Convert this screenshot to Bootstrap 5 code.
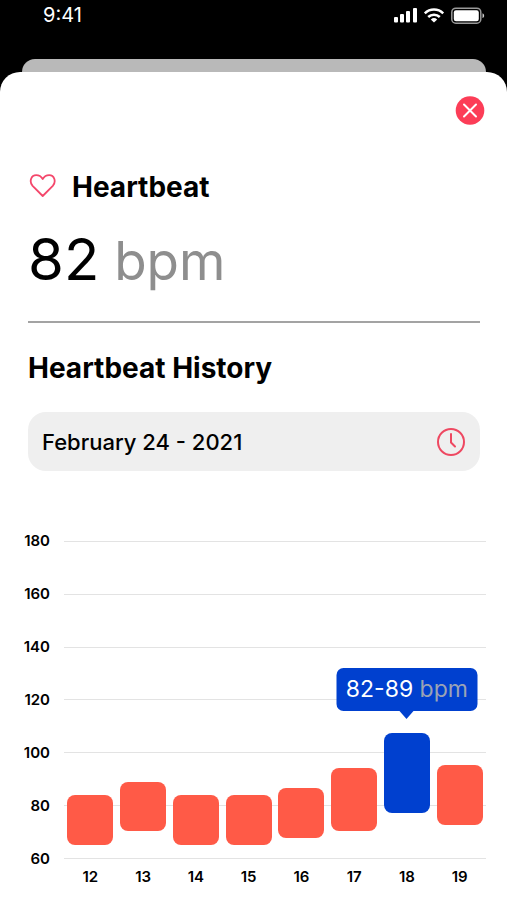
<!DOCTYPE html>
<html lang="en">
<head>
<meta charset="utf-8">
<meta name="viewport" content="width=device-width, initial-scale=1">
<title>Heartbeat</title>
<link href="https://cdn.jsdelivr.net/npm/bootstrap@5.3.0/dist/css/bootstrap.min.css" rel="stylesheet">
<style>
  :root { --plot-height: 318px; --unit: calc(var(--plot-height) / 120); }
  body { font-family: Inter, "Liberation Sans", sans-serif; background: #000; color: #000; }
  .status-bar { height: 59px; padding: 5px 22px 0 43px; font-size: 20px; line-height: 20px; }
  .status-icons { padding-top: 2px; }
  .sheet-behind { height: 13px; margin: 0 21px 0 22px; background: #b9b9b9; border-radius: 14px 14px 0 0; }
  .sheet { border-radius: 20px 20px 0 0; padding: 24px 21px 0 22px; }
  .close-btn { width: 30px; height: 30px; margin-right: 1px; }
  .block { margin: 0 6px; padding-top: 44px; }
  .title { font-size: 28px; line-height: 34px; font-weight: 700; }
  .reading { font-size: 58px; line-height: 70px; margin: 20px 0 25px; }
  .unit-text { color: #8e8e8e; font-size: 53px; }
  .divider { border-top: 2px solid #a3a3a3; opacity: 1; margin: 0 0 28px; }
  .history-title { margin-bottom: 27px; }
  .date-btn { background: #efefef; border-radius: 18px; height: 59px; padding: 0 14px; font-size: 22px; line-height: 28px; font-weight: 500; }
  .chart { display: grid; grid-template-columns: 28px 1fr; column-gap: 14px; padding-top: 61px; font-size: 15px; line-height: 18px; font-weight: 600; }
  .y-axis { height: calc(var(--plot-height) + 18px); }
  .plot { display: grid; height: calc(var(--plot-height) + 18px); padding: 9px 0; }
  .plot > * { grid-area: 1 / 1; }
  .grid-line { height: 1px; background: #e3e3e3; }
  .slot { flex: 1 1 0; display: flex; justify-content: center; }
  .bar { position: relative; width: 46px; border-radius: 8px; background: #ff5a47;
         height: calc((var(--high) - var(--low)) * var(--unit));
         margin-bottom: calc((var(--low) - 60) * var(--unit)); }
  .bar.active-day { background: #0040cf; }
  .bar-tip { position: absolute; left: 50%; bottom: calc(100% + 22px); transform: translateX(-50%);
         height: 43px; width: 141px; border-radius: 7px; background: #0040cf; color: #fff;
         font-size: 23px; line-height: 43px; font-weight: 400; white-space: nowrap; text-align: center; }
  .bar-tip::after { content: ""; position: absolute; top: 100%; left: 50%; margin-left: -7px;
         border: 7px solid transparent; border-top: 8px solid #0040cf; border-bottom: 0; }
  .tip-unit { color: #9aa3b5; }
  .x-axis { grid-column: 2; }
</style>
<script src="https://cdn.jsdelivr.net/npm/bootstrap@5.3.0/dist/js/bootstrap.bundle.min.js"></script>
</head>
<body>
<div class="d-flex flex-column min-vh-100">
  <header class="status-bar d-flex justify-content-between align-items-start text-white">
    <time>9:41</time>
    <div class="status-icons d-flex">
      <svg width="92" height="18" viewBox="0 -2 92 18" role="img" aria-label="Signal, Wi-Fi and battery">
        <g fill="#fff">
          <rect x="1" y="8" width="4" height="5.500" rx="1"/><rect x="7" y="5" width="4" height="8.500" rx="1"/>
          <rect x="13" y="2" width="4" height="11.500" rx="1"/><rect x="20" y="-1" width="4" height="14.500" rx="1"/>
        </g>
        <g fill="none" stroke="#fff" stroke-width="2.500">
          <path d="M31.800 4.300a13.300 13.300 0 0 1 18.400 0"/><path d="M35.200 8a8.400 8.400 0 0 1 11.600 0"/>
        </g>
        <path d="M37.800 10.400a4.900 4.900 0 0 1 6.400 0L41 13.600z" fill="#fff"/>
        <rect x="58.800" y="-.8" width="29" height="15" rx="4" fill="none" stroke="#999" stroke-width="1.500"/>
        <rect x="60.800" y="1.200" width="25" height="11" rx="2.200" fill="#fff"/>
        <path d="M89.500 4.300c2.200.8 2.200 4 0 4.800z" fill="#ccc"/>
      </svg>
    </div>
  </header>
  <div class="sheet-behind"></div>
  <main class="sheet bg-white flex-grow-1">
    <div class="d-flex justify-content-end">
      <button type="button" class="close-btn btn p-0 border-0 d-flex" aria-label="Close">
        <svg width="30" height="30" viewBox="0 0 30 30"><circle cx="15" cy="14.500" r="14.300" fill="#fc3d57"/><path d="M9 8.500l12 12M21 8.500l-12 12" stroke="#fff" stroke-width="2" stroke-linecap="round"/></svg>
      </button>
    </div>

    <section class="block">
      <div class="d-flex align-items-center">
        <svg class="me-3" width="28" height="28" viewBox="0 0 28 28" fill="none" stroke="#f4476b" stroke-width="1.800" stroke-linejoin="round"><path d="M14.700 23 4.600 12.800C.8 8.300 3.300 2.200 8.200 2.200c3 0 5 1.300 6.500 3.800 1.500-2.500 3.500-3.800 6.500-3.800 4.900 0 7.400 6.100 3.600 10.600z"/></svg>
        <h1 class="title mb-0">Heartbeat</h1>
      </div>
      <p class="reading">82<span class="unit-text"> bpm</span></p>
      <hr class="divider">
      <h2 class="title history-title">Heartbeat History</h2>
      <button type="button" class="date-btn w-100 border-0 d-flex justify-content-between align-items-center">
        February 24 - 2021
        <svg width="30" height="30" viewBox="0 0 30 30" fill="none" stroke="#ee4861" stroke-width="2" stroke-linecap="round" stroke-linejoin="round"><circle cx="15" cy="15" r="13"/><path d="M15 7v8.500l4 4"/></svg>
      </button>
    </section>

    <section class="chart" aria-label="Heartbeat range by day">
      <div class="y-axis d-flex flex-column justify-content-between text-end">
        <span>180</span><span>160</span><span>140</span><span>120</span><span>100</span><span>80</span><span>60</span>
      </div>
      <div class="plot">
        <div class="d-flex flex-column justify-content-between">
          <div class="grid-line"></div><div class="grid-line"></div><div class="grid-line"></div><div class="grid-line"></div><div class="grid-line"></div><div class="grid-line"></div><div class="grid-line"></div>
        </div>
        <div class="d-flex align-items-end">
          <div class="slot"><div class="bar" style="--low:65.3;--high:84.2"></div></div>
          <div class="slot"><div class="bar" style="--low:70.4;--high:89.2"></div></div>
          <div class="slot"><div class="bar" style="--low:65.3;--high:84.2"></div></div>
          <div class="slot"><div class="bar" style="--low:65.3;--high:84.2"></div></div>
          <div class="slot"><div class="bar" style="--low:68;--high:86.7"></div></div>
          <div class="slot"><div class="bar" style="--low:70.4;--high:94.3"></div></div>
          <div class="slot"><div class="bar active-day" style="--low:77.5;--high:107.5"><div class="bar-tip">82-89 <span class="tip-unit">bpm</span></div></div></div>
          <div class="slot"><div class="bar" style="--low:73;--high:95.3"></div></div>
        </div>
      </div>
      <div class="x-axis d-flex">
        <span class="slot">12</span><span class="slot">13</span><span class="slot">14</span><span class="slot">15</span><span class="slot">16</span><span class="slot">17</span><span class="slot">18</span><span class="slot">19</span>
      </div>
    </section>
  </main>
</div>
</body>
</html>
